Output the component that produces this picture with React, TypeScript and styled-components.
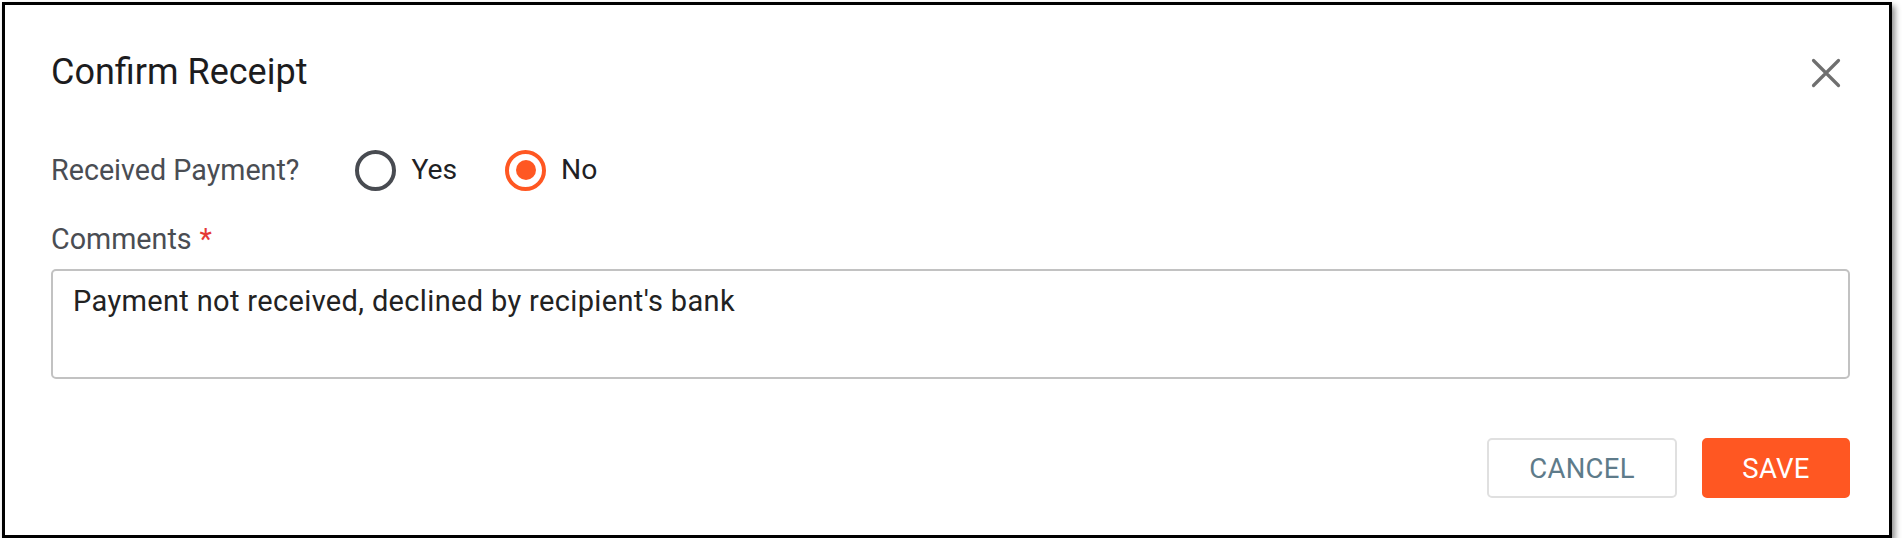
import React from "react";
import styled, { createGlobalStyle } from "styled-components";

const Global = createGlobalStyle`
  html, body { margin: 0; padding: 0; background: #ffffff; }
  body { font-family: Roboto, "Liberation Sans", Arial, sans-serif; }
  * { box-sizing: border-box; }
`;

const Frame = styled.div`
  margin: 2px 0 0 2px;
  width: 1890px;
  height: 536px;
  border: 3px solid #000;
  background: #fff;
  box-shadow: 3px 4px 6px rgba(0, 0, 0, 0.45);
  padding: 47px 38px 0 46px;
  display: flex;
  flex-direction: column;
`;

const Header = styled.div`
  display: flex;
  align-items: center;
  justify-content: space-between;
  height: 40px;
`;

const Title = styled.h2`
  margin: 0;
  font-size: 36px;
  line-height: 40px;
  font-weight: 400;
  color: #1c1c1e;
`;

const CloseButton = styled.button`
  border: 0;
  background: transparent;
  padding: 0;
  margin-right: 10px;
  margin-top: 2px;
  width: 30px;
  height: 30px;
  display: flex;
  align-items: center;
  justify-content: center;
  cursor: pointer;
`;

const RadioRow = styled.div`
  display: flex;
  align-items: center;
  height: 40px;
  margin-top: 58px;
`;

const FieldLabel = styled.span`
  font-size: 28.7px;
  line-height: 40px;
  color: #4a4d53;
`;

const RadioGroup = styled.div`
  display: flex;
  align-items: center;
  gap: 48px;
  margin-left: 56px;
`;

const RadioOption = styled.label`
  display: flex;
  align-items: center;
  gap: 15px;
  font-size: 28.3px;
  line-height: 40px;
  color: #202124;
  cursor: pointer;
`;

const RadioCircle = styled.span<{ $checked?: boolean }>`
  width: 41px;
  height: 41px;
  border-radius: 50%;
  border: 4px solid ${(p) => (p.$checked ? "#ff5722" : "#484b51")};
  display: flex;
  align-items: center;
  justify-content: center;
  &::after {
    content: "";
    display: ${(p) => (p.$checked ? "block" : "none")};
    width: 20px;
    height: 20px;
    border-radius: 50%;
    background: #ff5722;
  }
`;

const CommentsLabel = styled(FieldLabel)`
  display: block;
  margin-top: 29px;
`;

const Required = styled.span`
  color: #e53935;
  margin-left: 8px;
`;

const CommentBox = styled.textarea`
  display: block;
  margin-top: 10px;
  width: 1799px;
  height: 110px;
  border: 2px solid #c2c2c2;
  border-radius: 5px;
  padding: 14px 20px;
  font-family: Roboto, "Liberation Sans", Arial, sans-serif;
  font-size: 29px;
  line-height: 32px;
  letter-spacing: 0.35px;
  color: #222;
  resize: none;
  outline: none;
  background: #fff;
`;

const Actions = styled.div`
  display: flex;
  justify-content: flex-end;
  gap: 25px;
  margin-top: 59px;
  padding-right: 1px;
`;

const Button = styled.button<{ $primary?: boolean }>`
  height: 60px;
  min-width: ${(p) => (p.$primary ? "148px" : "190px")};
  border-radius: 5px;
  border: 2px solid ${(p) => (p.$primary ? "#ff5722" : "#e0e0e0")};
  background: ${(p) => (p.$primary ? "#ff5722" : "#fff")};
  color: ${(p) => (p.$primary ? "#fff" : "#5e7b8a")};
  font-family: Roboto, "Liberation Sans", Arial, sans-serif;
  font-size: 27.5px;
  font-weight: 400;
  letter-spacing: 0.3px;
  text-transform: uppercase;
  cursor: pointer;
`;

export default function App() {
  return (
    <>
      <Global />
      <Frame>
        <Header>
          <Title>Confirm Receipt</Title>
          <CloseButton aria-label="Close">
            <svg width="30" height="30" viewBox="0 0 30 30">
              <path
                d="M2.5 2.5 L27.5 27.5 M27.5 2.5 L2.5 27.5"
                stroke="#6f6f6f"
                strokeWidth="3.2"
                strokeLinecap="round"
              />
            </svg>
          </CloseButton>
        </Header>
        <RadioRow>
          <FieldLabel>Received Payment?</FieldLabel>
          <RadioGroup>
            <RadioOption>
              <RadioCircle />
              Yes
            </RadioOption>
            <RadioOption>
              <RadioCircle $checked />
              No
            </RadioOption>
          </RadioGroup>
        </RadioRow>
        <CommentsLabel>
          Comments<Required>*</Required>
        </CommentsLabel>
        <CommentBox
          readOnly
          value="Payment not received, declined by recipient's bank"
        />
        <Actions>
          <Button>Cancel</Button>
          <Button $primary>Save</Button>
        </Actions>
      </Frame>
    </>
  );
}
